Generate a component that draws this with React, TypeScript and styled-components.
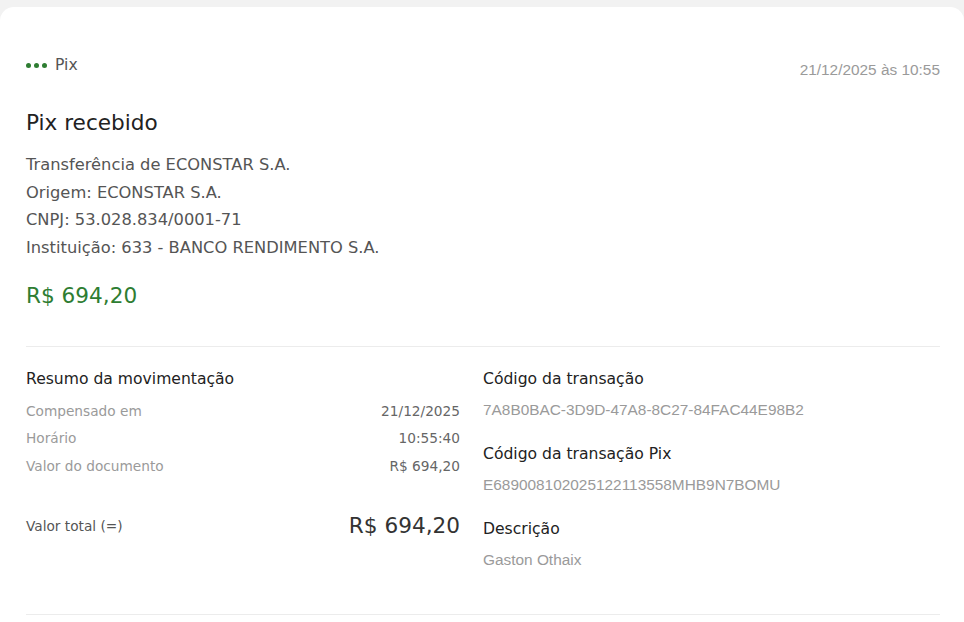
import React from "react";
import styled, { createGlobalStyle } from "styled-components";

const GlobalStyle = createGlobalStyle`
  html, body {
    margin: 0;
    padding: 0;
    background: #f2f2f2;
  }
  body {
    font-family: "DejaVu Sans", "Open Sans", sans-serif;
    -webkit-font-smoothing: antialiased;
  }
`;

interface SummaryRow {
  label: string;
  value: string;
}

const summaryRows: SummaryRow[] = [
  { label: "Compensado em", value: "21/12/2025" },
  { label: "Horário", value: "10:55:40" },
  { label: "Valor do documento", value: "R$ 694,20" },
];

interface DetailItem {
  title: string;
  value: string;
}

const details: DetailItem[] = [
  { title: "Código da transação", value: "7A8B0BAC-3D9D-47A8-8C27-84FAC44E98B2" },
  { title: "Código da transação Pix", value: "E68900810202512211355" + "8MHB9N7BOMU" },
  { title: "Descrição", value: "Gaston Othaix" },
];

const App: React.FC = () => {
  return (
    <>
      <GlobalStyle />
      <Page>
        <Card>
          <TopRow>
            <Tag>
              <Dots>
                <Dot />
                <Dot />
                <Dot />
              </Dots>
              Pix
            </Tag>
            <DateText>21/12/2025 às 10:55</DateText>
          </TopRow>

          <Title>Pix recebido</Title>
          <InfoList>
            <InfoLine>Transferência de ECONSTAR S.A.</InfoLine>
            <InfoLine>Origem: ECONSTAR S.A.</InfoLine>
            <InfoLine>CNPJ: 53.028.834/0001-71</InfoLine>
            <InfoLine>Instituição: 633 - BANCO RENDIMENTO S.A.</InfoLine>
          </InfoList>
          <Amount>R$ 694,20</Amount>

          <Divider />

          <Columns>
            <Summary>
              <SectionTitle>Resumo da movimentação</SectionTitle>
              <Rows>
                {summaryRows.map((row) => (
                  <Row key={row.label}>
                    <RowLabel>{row.label}</RowLabel>
                    <RowValue>{row.value}</RowValue>
                  </Row>
                ))}
              </Rows>
              <TotalRow>
                <TotalLabel>Valor total (=)</TotalLabel>
                <TotalValue>R$ 694,20</TotalValue>
              </TotalRow>
            </Summary>

            <Details>
              {details.map((item) => (
                <DetailBlock key={item.title}>
                  <SectionTitle>{item.title}</SectionTitle>
                  <Code>{item.value}</Code>
                </DetailBlock>
              ))}
            </Details>
          </Columns>

          <Divider />
        </Card>
      </Page>
    </>
  );
};

const Page = styled.div`
  padding-top: 7px;
`;

const Card = styled.div`
  background: #ffffff;
  border-radius: 14px 14px 0 0;
  padding: 44px 24px 7px 26px;
`;

const TopRow = styled.div`
  display: flex;
  justify-content: space-between;
  align-items: flex-start;
`;

const Tag = styled.div`
  display: flex;
  align-items: center;
  gap: 8px;
  font-size: 15.6px;
  color: #555555;
  height: 24px;
  margin-top: 2px;
`;

const Dots = styled.span`
  display: flex;
  gap: 3px;
`;

const Dot = styled.span`
  width: 5px;
  height: 5px;
  border-radius: 50%;
  background: #2e7d32;
`;

const DateText = styled.div`
  font-family: "Liberation Sans", Arial, sans-serif;
  font-size: 15.4px;
  line-height: 18px;
  color: #9a9a9a;
  margin-top: 10px;
`;

const Title = styled.h1`
  margin: 29px 0 0;
  font-size: 21.6px;
  font-weight: 400;
  color: #222222;
  line-height: 30px;
`;

const InfoList = styled.div`
  margin-top: 13px;
  display: flex;
  flex-direction: column;
`;

const InfoLine = styled.div`
  font-size: 16.3px;
  line-height: 27.5px;
  color: #555555;
`;

const Amount = styled.div`
  margin-top: 20px;
  font-size: 21.6px;
  line-height: 30px;
  color: #2e7d32;
`;

const Divider = styled.hr`
  margin: 35px 0 0;
  border: none;
  border-top: 1px solid #ececec;
`;

const Columns = styled.div`
  box-sizing: border-box;
  display: grid;
  grid-template-columns: 434px 1fr;
  column-gap: 23px;
  padding-top: 20px;
  height: 267px;

  & + ${Divider} {
    margin-top: 0;
  }
`;

const Summary = styled.div`
  display: flex;
  flex-direction: column;
`;

const SectionTitle = styled.div`
  font-size: 15.6px;
  line-height: 24px;
  color: #222222;
`;

const Rows = styled.div`
  margin-top: 6px;
  display: flex;
  flex-direction: column;
`;

const Row = styled.div`
  display: flex;
  justify-content: space-between;
  align-items: center;
  height: 27.5px;
`;

const RowLabel = styled.span`
  font-size: 13.7px;
  color: #9a9a9a;
`;

const RowValue = styled.span`
  font-size: 13.7px;
  color: #666666;
`;

const TotalRow = styled.div`
  margin-top: 31px;
  display: flex;
  justify-content: space-between;
  align-items: center;
  height: 30px;
`;

const TotalLabel = styled.span`
  font-size: 13.7px;
  color: #555555;
`;

const TotalValue = styled.span`
  font-size: 21.6px;
  color: #333333;
`;

const Details = styled.div`
  display: flex;
  flex-direction: column;
  gap: 24px;
`;

const DetailBlock = styled.div`
  display: flex;
  flex-direction: column;
  gap: 11px;
`;

const Code = styled.div`
  font-family: "Liberation Sans", Arial, sans-serif;
  font-size: 15.4px;
  line-height: 16px;
  color: #9a9a9a;
`;

export default App;
